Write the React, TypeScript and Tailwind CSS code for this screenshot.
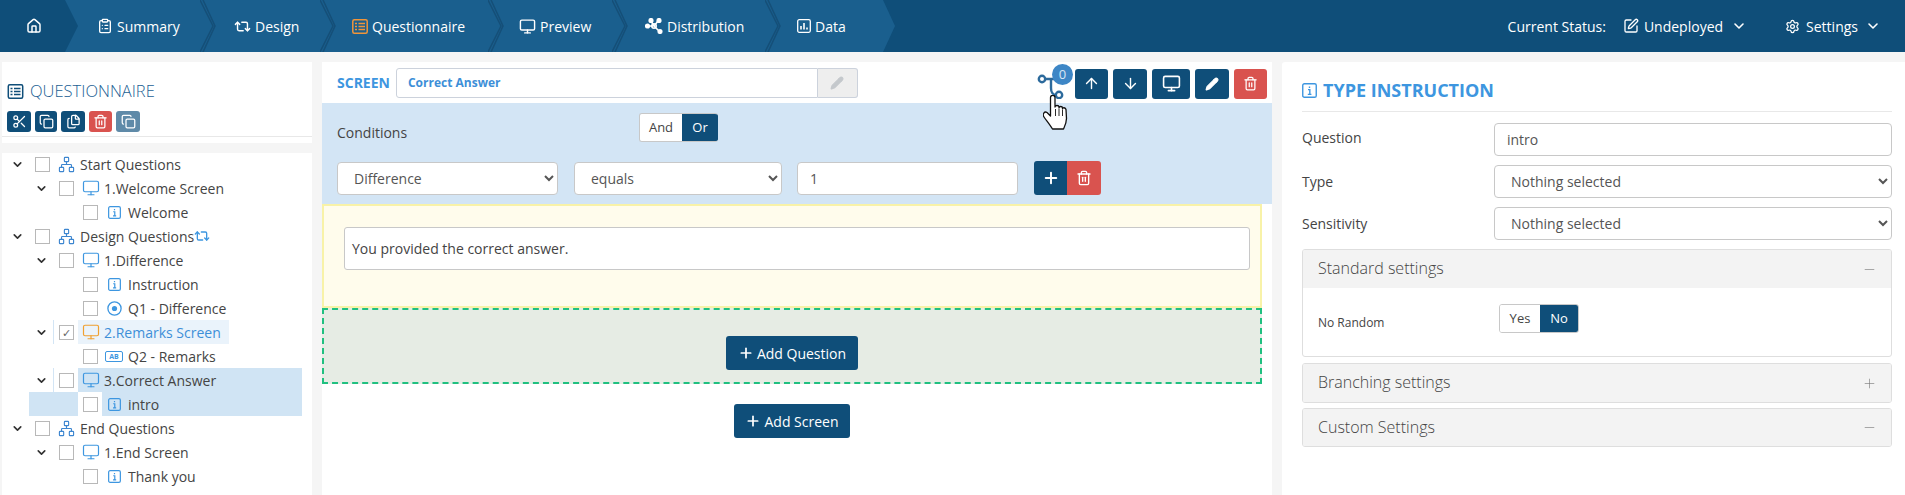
import React from "react";
import { ChevronDown, ClipboardList, Home, Monitor, Repeat2, Scissors, Copy, Files, SquarePen, Settings, ArrowUp, ArrowDown, Pencil, Plus, Minus, Trash2, Network } from "lucide-react";

const navTabs = [
    { label: "Summary", width: "w-[135px]", pad: "pl-[32px]", icon: <ClipboardList size={16} strokeWidth={2} /> },
    { label: "Design", width: "w-[120px]", pad: "pl-[34px]", icon: <Repeat2 size={17} strokeWidth={2} /> },
    { label: "Questionnaire", width: "w-[168px]", pad: "pl-[32px]", icon: <ListBox className="w-[16px] h-[15px] text-[#f0953a]" /> },
    { label: "Preview", width: "w-[124px]", pad: "pl-[31px]", icon: <Monitor size={17} strokeWidth={2} /> },
    { label: "Distribution", width: "w-[153px]", pad: "pl-[33px]", icon: <DistributionIcon /> },
    { label: "Data", width: "w-[115px]", pad: "pl-[32px]", icon: <DataIcon /> },
];

function ListBox({ className }: { className?: string }) {
    return (
        <svg viewBox="0 0 16 15" fill="none" stroke="currentColor" strokeWidth="1.5" className={className}>
            <rect x="0.8" y="0.8" width="14.4" height="13.4" rx="1.5" />
            <path d="M3 4.5h2M6.5 4.5H13M3 7.5h2M6.5 7.5H13M3 10.5h2M6.5 10.5H13" />
        </svg>
    );
}

function DistributionIcon() {
    return (
        <svg viewBox="0 0 18 16" className="w-[18px] h-[16px]" fill="none" stroke="currentColor" strokeWidth="1.6">
            <path d="M3 8h5M6 3l3 5 4-5M9 8l5 5" />
            <circle cx="2.5" cy="8" r="1.8" fill="currentColor" />
            <circle cx="6" cy="2.5" r="1.8" fill="currentColor" />
            <circle cx="14" cy="2.5" r="1.8" fill="currentColor" />
            <circle cx="15" cy="13.5" r="1.8" fill="currentColor" />
            <circle cx="9" cy="8" r="2.2" />
        </svg>
    );
}

function DataIcon() {
    return (
        <svg viewBox="0 0 14 14" className="w-[14px] h-[14px]" fill="none" stroke="currentColor" strokeWidth="1.3">
            <rect x="0.7" y="0.7" width="12.6" height="12.6" rx="1.5" />
            <path d="M4 10.5V7M7 10.5V4M10 10.5V8.5" strokeWidth="1.6" />
        </svg>
    );
}

function InfoIcon({ className }: { className?: string }) {
    return (
        <svg viewBox="0 0 14 14" className={className} fill="none" stroke="currentColor" strokeWidth="1.3">
            <rect x="0.7" y="0.7" width="12.6" height="12.6" rx="1.5" />
            <path d="M7 3.2v1.4M5.6 6.2H7.3v4.2M5.4 10.6h3.4" />
        </svg>
    );
}

function RadioIcon() {
    return (
        <svg viewBox="0 0 15 15" className="w-[15px] h-[15px] text-[#3d96e0]" fill="none" stroke="currentColor" strokeWidth="1.3">
            <circle cx="7.5" cy="7.5" r="6.6" />
            <circle cx="7.5" cy="7.5" r="2.6" fill="currentColor" stroke="none" />
        </svg>
    );
}

function TextBoxIcon() {
    return (
        <span className="flex flex-none items-center justify-center w-[18px] h-[11px] border border-[#3d96e0] rounded-[2px] text-[7px] leading-none font-bold text-[#3d96e0]">AB</span>
    );
}

function SectionIcon() {
    return <Network size={17} strokeWidth={1.6} className="text-[#3d86d0]" />;
}

function ScreenIcon({ orange }: { orange?: boolean }) {
    return <Monitor size={18} strokeWidth={1.6} className={orange ? "text-[#f0a030]" : "text-[#3d96e0]"} />;
}

const Check = ({ checked }: { checked?: boolean }) => (
    <span className="flex items-center justify-center flex-none w-[15px] h-[15px] border border-[#b8b8b8] bg-white text-[#666] text-[11px] leading-none">
        {checked ? "✓" : null}
    </span>
);

const Chevron = () => <ChevronDown size={13} strokeWidth={3} className="text-[#333]" />;

function SectionRow({ label, extra }: { label: string; extra?: boolean }) {
    return (
        <div className="flex items-center h-6 pl-[9px]">
            <span className="w-[24px] flex-none"><Chevron /></span>
            <Check />
            <span className="w-[8px]" />
            <SectionIcon />
            <span className="ml-[5px]">{label}</span>
            {extra ? <Repeat2 size={16} strokeWidth={2} className="text-[#3d96e0]" /> : null}
        </div>
    );
}

function ScreenRow({ label, state, rail }: { label: string; state?: "picked" | "active"; rail?: boolean }) {
    const bg = state === "picked" ? "bg-[#eaf3fb] w-[151px] text-[#3d8fd8]" : state === "active" ? "bg-[#d0e4f4] w-[224px]" : "";
    return (
        <div className="flex items-center h-6 pl-[33px]">
            <span className="w-[18px] flex-none"><Chevron /></span>
            <span className={`w-px h-6 flex-none ${rail ? "bg-[#d3e5f5]" : ""}`} />
            <span className="w-[5px] flex-none" />
            <Check checked={state === "picked"} />
            <span className={`flex items-center h-6 ml-[4px] pl-[4px] ${bg}`}>
                <ScreenIcon orange={state === "picked"} />
                <span className="ml-[4px]">{label}</span>
            </span>
        </div>
    );
}

function ItemRow({ label, icon, active }: { label: string; icon: React.ReactNode; active?: boolean }) {
    return (
        <div className="flex items-center h-6 pl-[27px]">
            <span className={`w-[49px] h-6 flex-none ${active ? "bg-[#d0e4f4]" : ""}`} />
            <span className="w-[24px] h-6 flex-none flex items-center justify-center pl-[1px] bg-white"><Check /></span>
            <span className={`flex items-center h-6 flex-none pl-[3px] ${active ? "bg-[#d0e4f4] w-[200px]" : ""}`}>
                <span className="w-[18px] flex justify-center">{icon}</span>
                <span className="ml-[5px]">{label}</span>
            </span>
        </div>
    );
}

const blueInfo = <InfoIcon className="w-[13px] h-[13px] text-[#3d96e0]" />;

const ToolBtn = ({ children, color = "bg-[#0f4e79]", width }: { children: React.ReactNode; color?: string; width: string }) => (
    <span className={`flex items-center justify-center h-[21px] rounded-[3px] text-white ${color} ${width}`}>{children}</span>
);

const ActionBtn = ({ children, color = "bg-[#0f4e79]", width }: { children: React.ReactNode; color?: string; width: string }) => (
    <span className={`flex items-center justify-center h-[30px] rounded-[3px] text-white ${color} ${width}`}>{children}</span>
);

const Panel = ({ title, sign, height = "h-[38px]", children }: { title: string; sign: "minus" | "plus"; height?: string; children?: React.ReactNode }) => (
    <div className="border border-[#dedede] rounded-[3px] overflow-hidden">
        <div className={`flex items-center justify-between pl-[15px] pr-[14px] bg-[#f3f3f3] text-[16px] font-light text-[#444] ${height}`}>
            <span className="pb-[2px]">{title}</span>
            {sign === "minus" ? <Minus size={15} strokeWidth={1} className="text-[#777]" /> : <Plus size={15} strokeWidth={1} className="text-[#777]" />}
        </div>
        {children}
    </div>
);

export default function App() {
    const field = "h-[33px] border border-[#c8c8c8] rounded-[4px] bg-white text-[14px] text-[#555]";
    return (
        <div className="h-[495px] overflow-hidden bg-[#f5f5f5] text-[14px] text-[#444] font-['Open_Sans',sans-serif]">
            <nav className="flex items-center h-[52px] bg-[#0f4e79] text-white">
                <div className="relative flex-none flex items-center w-[65px] h-[52px] pl-[26px] bg-[#0f4e79]">
                    <Home size={16} strokeWidth={2.2} />
                    <svg viewBox="0 0 13 52" className="absolute left-full top-0 w-[13px] h-[52px] z-20">
                        <polygon points="0,0 0,52 13,26" fill="#0f4e79" />
                    </svg>
                </div>
                {navTabs.map((tab, i) => (
                    <div key={tab.label} className={`relative flex-none flex items-center h-[52px] bg-[#1a5f8e] ${tab.width} ${tab.pad}`} style={{ zIndex: 10 - i }}>
                        <span className="flex items-center gap-[4px]">
                            {tab.icon}
                            <span>{tab.label}</span>
                        </span>
                        <svg viewBox="0 0 16 52" className="absolute left-full top-0 w-[16px] h-[52px]">
                            <polygon points="0,0 3,0 15,26 3,52 0,52" fill="#1a5f8e" />
                            {i < navTabs.length - 1 ? <path d="M0 0 L13 26 L0 52 M3 0 L15 26 L3 52" fill="none" stroke="#154f78" strokeWidth="1.5" /> : null}
                        </svg>
                    </div>
                ))}
                <div className="ml-auto flex items-center">
                    <span>Current Status:</span>
                    <SquarePen size={16} strokeWidth={2} className="ml-[17px]" />
                    <span className="ml-[5px]">Undeployed</span>
                    <ChevronDown size={16} strokeWidth={2.4} className="ml-[8px]" />
                    <Settings size={15} strokeWidth={2} className="ml-[38px]" />
                    <span className="ml-[6px]">Settings</span>
                    <ChevronDown size={16} strokeWidth={2.4} className="ml-[7px] mr-[24px]" />
                </div>
            </nav>

            <div className="flex pt-[10px]">
                <aside className="flex-none w-[310px] ml-[2px] mr-[10px]">
                    <div className="h-[81px] bg-white pl-[5px] border-b-[6px] border-b-white relative">
                        <div className="flex items-center h-[49px] pt-[9px] text-[#1d5f94] text-[16.5px] font-light">
                            <ListBox className="w-[17px] h-[15px] text-[#0f4e79]" />
                            <span className="ml-[6px]">QUESTIONNAIRE</span>
                        </div>
                        <div className="flex gap-[4px]">
                            <ToolBtn width="w-[24px]"><Scissors size={15} /></ToolBtn>
                            <ToolBtn width="w-[22px]"><Copy size={15} /></ToolBtn>
                            <ToolBtn width="w-[24px]"><Files size={15} /></ToolBtn>
                            <ToolBtn width="w-[23px]" color="bg-[#d9534f]"><Trash2 size={15} /></ToolBtn>
                            <ToolBtn width="w-[24px]" color="bg-[#5f8aa8]"><Copy size={15} /></ToolBtn>
                        </div>
                        <div className="absolute left-0 right-0 bottom-0 border-b border-[#e8e8e8]" />
                    </div>
                    <div className="flex flex-col mt-[10px] h-[342px] bg-white">
                        <div className="-mt-px">
                            <SectionRow label="Start Questions" />
                            <ScreenRow label="1.Welcome Screen" />
                            <ItemRow label="Welcome" icon={blueInfo} />
                            <SectionRow label="Design Questions" extra />
                            <ScreenRow label="1.Difference" />
                            <ItemRow label="Instruction" icon={blueInfo} />
                            <ItemRow label="Q1 - Difference" icon={<RadioIcon />} />
                            <ScreenRow label="2.Remarks Screen" state="picked" rail />
                            <ItemRow label="Q2 - Remarks" icon={<TextBoxIcon />} />
                            <ScreenRow label="3.Correct Answer" state="active" rail />
                            <ItemRow label="intro" icon={blueInfo} active />
                            <SectionRow label="End Questions" />
                            <ScreenRow label="1.End Screen" />
                            <ItemRow label="Thank you" icon={blueInfo} />
                        </div>
                    </div>
                </aside>

                <main className="flex-none w-[950px] mr-[10px] h-[433px] bg-white">
                    <div className="relative flex items-center h-[41px] pl-[15px] pr-[5px]">
                        <span className="text-[14px] font-bold text-[#3d96e0]">SCREEN</span>
                        <div className="flex ml-[6px] h-[30px] w-[462px]">
                            <span className="flex items-center flex-1 pl-[11px] border border-[#ccd2dc] rounded-l-[3px] text-[12px] font-bold text-[#3d8fd8]">Correct Answer</span>
                            <span className="flex items-center justify-center w-[40px] bg-[#eeeeee] border border-l-0 border-[#ccd2dc] rounded-r-[3px]"><Pencil size={14} className="text-[#c4c8cc]" fill="#c4c8cc" /></span>
                        </div>
                        <div className="ml-auto flex gap-[5px] pt-[2px]">
                            <ActionBtn width="w-[33px]"><ArrowUp size={17} strokeWidth={2} /></ActionBtn>
                            <ActionBtn width="w-[34px]"><ArrowDown size={17} strokeWidth={2} /></ActionBtn>
                            <ActionBtn width="w-[38px]"><Monitor size={19} strokeWidth={2} /></ActionBtn>
                            <ActionBtn width="w-[34px]"><Pencil size={14} fill="currentColor" /></ActionBtn>
                            <ActionBtn width="w-[33px]" color="bg-[#d9534f]"><Trash2 size={15} /></ActionBtn>
                        </div>
                        <svg viewBox="0 0 30 26" className="absolute left-[714px] top-[11px] w-[30px] h-[26px] text-[#2c6a9c]" fill="none" stroke="currentColor" strokeWidth="2.4">
                            <circle cx="6" cy="6" r="3.2" />
                            <circle cx="23" cy="22" r="3.2" />
                            <path d="M9 6h11M15 6v9c0 4 2 7 5 7" />
                        </svg>
                        <span className="absolute left-[730px] top-[2px] flex items-center justify-center w-[21px] h-[21px] rounded-full bg-[#3d86c6] text-white/80 text-[13px]">0</span>
                        <svg viewBox="0 0 25 35" className="absolute left-[721px] top-[33px] w-[25px] h-[35px] z-10" fill="#fff" stroke="#111" strokeWidth="1.3" strokeLinejoin="round">
                            <path d="M7.5 2.5c0-3 4.500-3 4.500 0V12c0-2 4-2 4 0v1c0-2 3.500-2 3.500 0v1c0-2 3-1.500 3.500.5l.5 9c0 4-1.500 7-3 10.500H9.500C7 30 3 25 1 22-1 19 1.500 16 4 17.500L7.500 21z" />
                            <path d="M12.500 14v7M16 14v7M19.500 15v6" strokeWidth="0.9" />
                        </svg>
                    </div>

                    <div className="h-[101px] bg-[#d3e5f5] pl-[15px] pt-[10px]">
                        <div className="flex items-start h-[48px]">
                            <span className="w-[302px] pt-[9px]">Conditions</span>
                            <div className="flex h-[29px] text-[13px] rounded-[3px] overflow-hidden border border-[#c8c8c8] border-r-0">
                                <span className="flex items-center justify-center w-[42px] bg-white text-[#444]">And</span>
                                <span className="flex items-center justify-center w-[36px] bg-[#0f4e79] text-white">Or</span>
                            </div>
                        </div>
                        <div className="flex items-center">
                            <select className={`${field} w-[221px] pl-[12px]`} defaultValue="Difference"><option>Difference</option></select>
                            <select className={`${field} w-[208px] ml-[16px] pl-[12px]`} defaultValue="equals"><option>equals</option></select>
                            <input readOnly value="1" className={`${field} w-[221px] ml-[15px] pl-[12px]`} />
                            <span className="flex ml-[16px] h-[34px] rounded-[3px] overflow-hidden text-white">
                                <span className="flex items-center justify-center w-[33px] bg-[#0f4e79]"><Plus size={18} strokeWidth={2.6} /></span>
                                <span className="flex items-center justify-center w-[34px] bg-[#d9534f]"><Trash2 size={16} /></span>
                            </span>
                        </div>
                    </div>

                    <div className="w-[940px] h-[104px] bg-[#fffcec] border-2 border-[#f8f2a8] pl-[20px] pr-[10px] pt-[21px]">
                        <div className="flex items-center h-[43px] pl-[7px] bg-white border border-[#c8c8c8] rounded-[3px]">You provided the correct answer.</div>
                    </div>
                    <div className="flex items-start justify-center w-[940px] h-[76px] pt-[26px] bg-[#e6ece4] border-2 border-dashed border-[#20c080]">
                        <span className="flex items-center justify-center gap-[3px] w-[132px] h-[34px] rounded-[3px] bg-[#0f4e79] text-white"><Plus size={16} strokeWidth={2.6} />Add Question</span>
                    </div>
                    <div className="flex justify-center w-[940px] mt-[20px]">
                        <span className="flex items-center justify-center gap-[3px] w-[116px] h-[34px] rounded-[3px] bg-[#0f4e79] text-white"><Plus size={16} strokeWidth={2.6} />Add Screen</span>
                    </div>
                </main>

                <section className="flex-1 h-[433px] bg-white rounded-tl-[3px] pl-[20px] pr-[13px]">
                    <div className="flex items-center h-[50px] border-b border-[#e8e8e8] pt-[8px] text-[18px] font-bold text-[#3d96e0]">
                        <InfoIcon className="w-[15px] h-[15px]" />
                        <span className="ml-[6px]">TYPE INSTRUCTION</span>
                    </div>
                    <div className="grid grid-cols-[192px_1fr] gap-y-[9px] pt-[11px] items-start">
                        <span className="pt-[4px]">Question</span>
                        <input readOnly value="intro" className={`${field} w-full pl-[12px]`} />
                        <span className="pt-[6px]">Type</span>
                        <select className={`${field} w-full pl-[12px]`} defaultValue="Nothing selected"><option>Nothing selected</option></select>
                        <span className="pt-[6px]">Sensitivity</span>
                        <select className={`${field} w-full pl-[12px]`} defaultValue="Nothing selected"><option>Nothing selected</option></select>
                    </div>
                    <div className="flex flex-col gap-[5px] mt-[9px]">
                        <Panel title="Standard settings" sign="minus">
                            <div className="flex h-[68px] pl-[15px] pt-[16px] text-[12px]">
                                <span className="w-[181px] pt-[10px]">No Random</span>
                                <div className="flex h-[29px] text-[13px] rounded-[3px] overflow-hidden border border-[#c8c8c8]">
                                    <span className="flex items-center justify-center w-[40px] bg-white">Yes</span>
                                    <span className="flex items-center justify-center w-[38px] bg-[#0f4e79] text-white">No</span>
                                </div>
                            </div>
                        </Panel>
                        <div className="mt-px">
                            <Panel title="Branching settings" sign="plus" />
                        </div>
                        <Panel title="Custom Settings" sign="minus" height="h-[37px]" />
                    </div>
                </section>
            </div>
        </div>
    );
}
